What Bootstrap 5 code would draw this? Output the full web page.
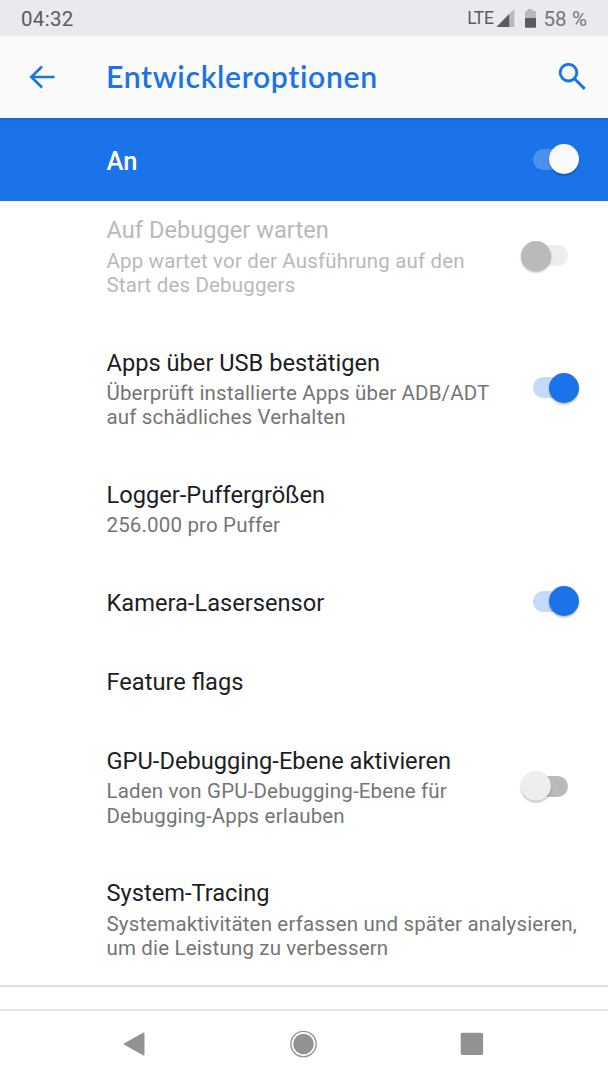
<!DOCTYPE html>
<html lang="de">
<head>
<meta charset="utf-8">
<meta name="viewport" content="width=device-width, initial-scale=1">
<title>Entwickleroptionen</title>
<link href="https://cdn.jsdelivr.net/npm/bootstrap@5.3.0/dist/css/bootstrap.min.css" rel="stylesheet">
<style>
  :root { --accent: #1a73e8; }
  body { font-family: Roboto, "Noto Sans", sans-serif; width: 608px; height: 1080px; }
  .status-bar { height: 36px; background: #e8eaed; color: #5a5c5d; font-size: 20.5px; padding: 1px 21px 0 21px; line-height: 36px; }
  .status-bar .clock { letter-spacing: .3px; }
  .status-bar .lte { font-size: 17.5px; letter-spacing: -.4px; margin-right: 3px; padding-bottom: 2px; }
  .status-bar .percent { color: #757678; letter-spacing: .1px; margin-left: 6px; }
  .app-bar { height: 82px; background: #fafafa; color: var(--accent); padding: 0 21px 0 28px; }
  .app-title { font-family: Lato, sans-serif; font-weight: 600; font-size: 30.2px; line-height: 40px; margin-left: 50px; padding-bottom: 2px; letter-spacing: .65px; }
  .master { height: 83px; background: linear-gradient(#1766cf, #1a73e8 4px); color: #fff; padding-left: 106.5px; font-weight: 500; font-size: 25.5px; }
  .master-label { padding-top: 3px; }
  .clip { height: 784px; }
  .prefs { margin-top: -10.9px; }
  .pref { padding: 27.3px 28px 24.9px 106.500px; border: 0; background: none; }
  .pref-title { font-size: 23.650px; line-height: 27px; color: #1d1e1f; }
  .pref-sub { font-size: 20.5px; line-height: 24.3px; margin-top: 4.4px; color: #757575; letter-spacing: .16px; }
  .pref.off-state .pref-title, .pref.off-state .pref-sub { color: #b9b9b9; }
  .toggle { width: 35px; height: 21px; border-radius: 11px; background: #b9b9b9; margin-right: 40.5px; margin-top: -1px; }
  .pref .toggle { margin-right: 12.5px; margin-top: -3.5px; }
  .toggle::after { content: ""; position: absolute; top: -4.5px; left: -12px; width: 30px; height: 30px; border-radius: 50%; background: #ecedee; box-shadow: 0 1.5px 2px rgba(0,0,0,.28); }
  .toggle.on { background: #c3daf8; }
  .toggle.on::after { left: 16.5px; background: var(--accent); }
  .toggle.inactive { background: #ededed; }
  .toggle.inactive::after { background: #bababa; }
  .master .toggle { background: #4b90ed; }
  .master .toggle::after { background: #fafafa; }
  .rule { border-top: 2px solid #e0e0e0; }
  .gap-strip { height: 24px; }
  .nav-keys { height: 71px; padding: 0 124px 3px 123px; color: #929292; border-top: 2px solid #e3e3e3; }
</style>
</head>
<body class="bg-white overflow-hidden d-flex flex-column">
  <header>
    <div class="status-bar d-flex align-items-center">
      <span class="clock me-auto">04:32</span>
      <span class="lte">LTE</span>
      <svg width="19" height="19" viewBox="0 0 19 19"><path fill="#b7b9bb" d="M18.300 0v18H.5z"/><path fill="#5a5c5d" d="M13.200 5v13H.5z"/></svg>
      <svg class="ms-2" width="14" height="22" viewBox="0 0 14 22"><path fill="#b5b7b9" d="M4.500 1h5v2h2.500q1 0 1 1v6H2V4q0-1 1-1h1.500z"/><path fill="#5a5c5d" d="M2 10h11v8.500q0 1.200-1.200 1.200H3.200q-1.200 0-1.200-1.200z"/></svg>
      <span class="percent">58 %</span>
    </div>
    <div class="app-bar d-flex align-items-center">
      <svg width="28" height="26" viewBox="0 0 28 26" fill="none" stroke="currentColor" stroke-width="2.600"><path d="M26.500 13H3.500M14 2.500 3.300 13 14 23.500"/></svg>
      <h1 class="app-title mb-0 me-auto">Entwickleroptionen</h1>
      <svg width="29" height="28" viewBox="0 0 29 28" fill="none" stroke="currentColor" stroke-width="2.900"><circle cx="10.500" cy="9.700" r="8.300"/><path d="m16.500 15.700 10.200 10.200"/></svg>
    </div>
  </header>
  <div class="master d-flex align-items-center justify-content-between">
    <span class="master-label">An</span><span class="toggle on position-relative"></span>
  </div>
  <main class="clip overflow-hidden">
    <ul class="prefs list-group list-group-flush">
      <li class="pref off-state d-flex align-items-center justify-content-between">
        <div><div class="pref-title">Auf Debugger warten</div><div class="pref-sub">App wartet vor der Ausführung auf den<br>Start des Debuggers</div></div>
        <span class="toggle inactive position-relative"></span>
      </li>
      <li class="pref d-flex align-items-center justify-content-between">
        <div><div class="pref-title">Apps über USB bestätigen</div><div class="pref-sub">Überprüft installierte Apps über ADB/ADT<br>auf schädliches Verhalten</div></div>
        <span class="toggle on position-relative"></span>
      </li>
      <li class="pref">
        <div class="pref-title">Logger-Puffergrößen</div><div class="pref-sub">256.000 pro Puffer</div>
      </li>
      <li class="pref d-flex align-items-center justify-content-between">
        <div class="pref-title">Kamera-Lasersensor</div>
        <span class="toggle on position-relative"></span>
      </li>
      <li class="pref"><div class="pref-title">Feature flags</div></li>
      <li class="pref d-flex align-items-center justify-content-between">
        <div><div class="pref-title">GPU-Debugging-Ebene aktivieren</div><div class="pref-sub">Laden von GPU-Debugging-Ebene für<br>Debugging-Apps erlauben</div></div>
        <span class="toggle position-relative"></span>
      </li>
      <li class="pref">
        <div class="pref-title">System-Tracing</div><div class="pref-sub text-nowrap">Systemaktivitäten erfassen und später analysieren,<br>um die Leistung zu verbessern</div>
      </li>
    </ul>
  </main>
  <div class="rule gap-strip"></div>
  <nav class="nav-keys d-flex align-items-center justify-content-between">
    <svg width="23" height="26" viewBox="0 0 23 26"><path fill="currentColor" stroke="currentColor" stroke-width="2" stroke-linejoin="round" d="M20.500 2.500v21L1.800 13z"/></svg>
    <svg width="28" height="28" viewBox="0 0 28 28"><circle cx="14.500" cy="14" r="12.600" fill="none" stroke="currentColor" stroke-width="1.400"/><circle cx="14.500" cy="14" r="10.300" fill="currentColor"/></svg>
    <svg width="24" height="24" viewBox="0 0 24 24"><rect x=".7" y=".7" width="22.400" height="22.400" rx="1.800" fill="currentColor"/></svg>
  </nav>
<script src="https://cdn.jsdelivr.net/npm/bootstrap@5.3.0/dist/js/bootstrap.bundle.min.js"></script>
</body>
</html>
